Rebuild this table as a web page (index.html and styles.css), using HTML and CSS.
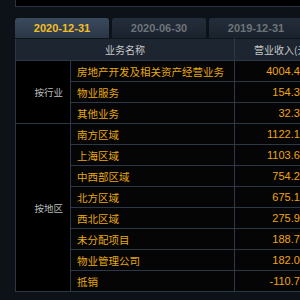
FILE: index.html
```html
<!DOCTYPE html>
<html>
<head>
<meta charset="utf-8">
<link rel="stylesheet" href="styles.css">
</head>
<body>
<div class="topbox"></div>
<div class="panel">
  <div class="tabs">
    <div class="tab active">2020-12-31</div>
    <div class="tab">2020-06-30</div>
    <div class="tab">2019-12-31</div>
  </div>
  <table class="grid">
    <colgroup>
      <col class="c-cat">
      <col class="c-name">
      <col class="c-val">
    </colgroup>
    <thead>
      <tr><th colspan="2">业务名称</th><th>营业收入(元)</th></tr>
    </thead>
    <tbody>
      <tr><td class="cat" rowspan="3">按行业</td><td class="name">房地产开发及相关资产经营业务</td><td class="val">4004.43</td></tr>
      <tr><td class="name">物业服务</td><td class="val">154.32</td></tr>
      <tr><td class="name">其他业务</td><td class="val">32.32</td></tr>
      <tr><td class="cat" rowspan="8">按地区</td><td class="name">南方区域</td><td class="val">1122.12</td></tr>
      <tr><td class="name">上海区域</td><td class="val">1103.62</td></tr>
      <tr><td class="name">中西部区域</td><td class="val">754.22</td></tr>
      <tr><td class="name">北方区域</td><td class="val">675.12</td></tr>
      <tr><td class="name">西北区域</td><td class="val">275.92</td></tr>
      <tr><td class="name">未分配项目</td><td class="val">188.72</td></tr>
      <tr><td class="name">物业管理公司</td><td class="val">182.02</td></tr>
      <tr><td class="name">抵销</td><td class="val">-110.72</td></tr>
    </tbody>
  </table>
</div>
</body>
</html>
```
FILE: styles.css
```css
html, body {
  margin: 0;
  padding: 0;
}
body {
  background: #0d1219;
  width: 300px;
  height: 300px;
  overflow: hidden;
  font-family: "Noto Sans CJK SC", "Liberation Sans", sans-serif;
}
.topbox {
  margin-left: 15px;
  width: 320px;
  height: 6px;
  background: #000;
  border: 1px solid #2a3441;
  border-top: none;
}
.panel {
  margin-left: 15px;
  margin-top: 11px;
  width: 330px;
}
.tabs {
  display: flex;
  gap: 3px;
  height: 20px;
}
.tab {
  width: 94px;
  flex: none;
  height: 20px;
  line-height: 20px;
  text-align: center;
  border-radius: 3px 3px 0 0;
  background: linear-gradient(#242e3b, #1a222c);
  color: #6e737a;
  font-family: "Liberation Sans", sans-serif;
  font-weight: bold;
  font-size: 11px;
}
.tab.active {
  background: linear-gradient(#3a4a5e, #2a3646);
  color: #f2be25;
}
.grid {
  border-collapse: collapse;
  table-layout: fixed;
  width: 315px;
  background: #050505;
}
.c-cat { width: 55px; }
.c-name { width: 164px; }
.c-val { width: 96px; }
.grid th {
  height: 21px;
  padding: 0;
  background: #1c2530;
  color: #c9c9c9;
  font-weight: normal;
  font-size: 10px;
  text-align: center;
  border: 1px solid #2d3847;
  border-top: 1px solid #0f141b;
}
.grid td {
  height: 20px;
  padding: 0;
  border: 1px solid #2d3847;
  white-space: nowrap;
  overflow: hidden;
}
.grid .cat {
  background: #000;
  color: #bdbdbd;
  font-size: 9.5px;
  text-align: right;
  padding-right: 7px;
  vertical-align: middle;
}
.grid .name {
  color: #e8a814;
  font-size: 10.5px;
  padding-left: 6px;
}
.grid .val {
  color: #eea414;
  font-family: "Liberation Sans", sans-serif;
  font-size: 11px;
  text-align: right;
  padding-right: 24px;
}
```
